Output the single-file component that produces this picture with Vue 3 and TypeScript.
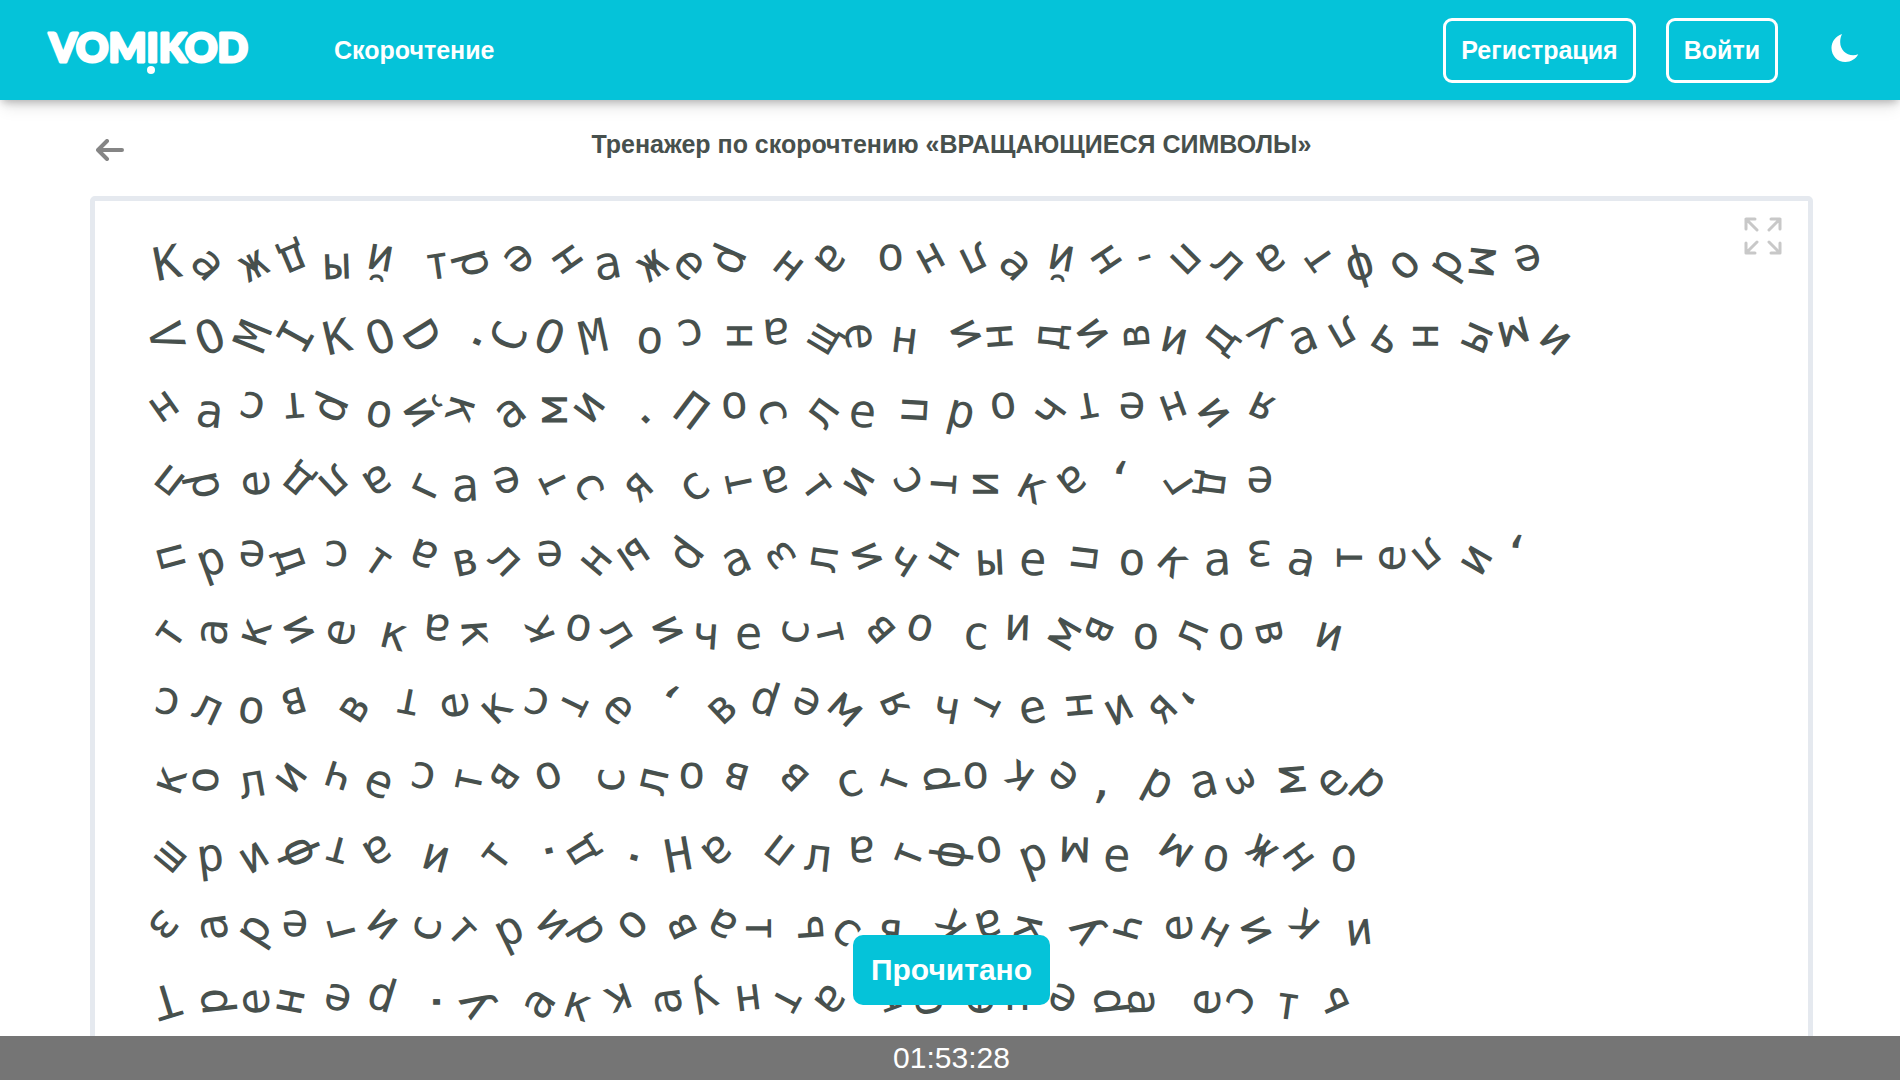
<script setup lang="ts">
import { ref } from 'vue'

interface Word {
  text: string
  angles: number[]
}

const word = (text: string, ...angles: number[]): Word => ({ text, angles })

// Each line is a list of words; every character carries its own rotation in degrees.
const lines = ref<Word[][]>([
  [
    word('Каждый', -11, 47, -28, 157, -2, 190),
    word('тренажер', -8, 75, 140, 235, -10, -35, 45, 114),
    word('на', 38, 130),
    word('онлайн-платформе', 178, 152, 154, 45, 190, 236, 164, 135, 43, 145, 235, -17, -45, -58, 96, 165),
  ],
  [
    word('VOMIKOD.COM', 76, -22, -68, -61, -13, -20, 58, -65, -68, 22, -12),
    word('оснащен', 3, 166, 270, 175, -59, 85, 7),
    word('индивидуальными', 243, 86, -85, 233, 266, 12, -53, 218, -22, 150, 33, 90, -66, 165, 40),
  ],
  [
    word('настройками.', 145, 6, 194, 175, 114, 10, 57, 107, -38, -90, 126, -46),
    word('После', 37, 175, 72, -54, 5),
    word('прочтения', 93, 14, 172, -54, 170, 182, 160, 51, 205),
  ],
  [
    word('предлагается', 218, 78, -95, 219, 137, 148, -65, -3, 165, 244, 60, -42),
    word('статистика,', -38, 258, 165, 53, 120, -125, 94, 90, 27, 143, 188),
    word('где', 236, 97, 182),
  ],
  [
    word('представлены', 255, -20, 183, 70, 180, 34, 200, -12, 45, 180, -50, 146),
    word('различные', 127, -25, -125, -82, 246, 32, 120, -3, 3),
    word('показатели,', 97, 0, 42, -3, 178, 12, 270, -88, 140, -60, 185),
  ],
  [
    word('такие', -55, -86, -72, 243, -78),
    word('как', 14, 185, 86),
    word('количество', -110, 190, 58, 244, 4, 0, -84, 77, 229, 195),
    word('символов', 2, 182, -60, 113, 0, -68, -5, 77),
    word('и', 14),
  ],
  [
    word('слов', 192, 25, 8, 163),
    word('в', -58),
    word('тексте,', 191, -98, -43, 196, 116, 42, 208),
    word('время', -43, 198, 205, 42, -113),
    word('чтения,', 10, 117, -12, 265, -28, -45, 115),
  ],
  [
    word('количество', -71, 90, -10, 126, 198, 22, 190, -78, 123, 160),
    word('слов', -88, -77, 180, 196),
    word('в', 224),
    word('строке,', -20, -70, -97, 178, 214, 220, 5),
    word('размер', 28, -14, 62, -95, -42, 42),
  ],
  [
    word('шрифта', -50, -7, -32, 247, 195, 150),
    word('и', 15),
    word('т.д.', -53, -103, 238, -75),
    word('На', -10, 140),
    word('платформе', 218, 6, 178, -69, -82, 170, -20, 182, 3),
    word('можно', 214, 10, 218, 54, 3),
  ],
  [
    word('зарегистрироваться', 132, -98, -57, 182, -105, 218, -77, 46, -26, 222, 58, 135, -116, 208, 90, -94, 40, 5),
    word('как', 235, 165, 103),
    word('Ученик', 235, 106, -93, 28, 63, 225),
    word('и', -6),
  ],
  [
    word('Тренер.', 163, -96, -95, 101, 195, 197, -90),
    word('У', 238),
    word('аккаунта', -57, 18, 160, -97, 150, 173, 118, 128),
    word('тренера', 160, 80, -90, 180, 205, -96, 88),
    word('есть', -88, 125, 8, -114),
  ],
])

const elapsed = ref('01:53:28')
</script>

<template>
  <header class="topbar">
    <a class="logo" href="#" aria-label="VOMIKOD">
      <svg width="220" height="60" viewBox="0 0 220 60">
        <text x="9" y="42">VOMIKOD</text>
        <circle cx="111" cy="50" r="4" />
      </svg>
    </a>
    <nav class="menu">
      <a href="#">Скорочтение</a>
    </nav>
    <div class="account">
      <a class="outlined" href="#">Регистрация</a>
      <a class="outlined" href="#">Войти</a>
    </div>
    <button class="theme" type="button" aria-label="Тёмная тема">
      <svg width="28" height="28" viewBox="0 0 28 28">
        <path d="M11 0C4.600 2.300 0.500 7.600 0.500 14C0.500 21.800 6.500 28 14.300 28C20 28 24.800 25 27.200 20.300C25.500 21 23.900 21.300 22.200 21.300C14.900 21.300 9.200 15.600 9.200 8.300C9.200 5.200 9.700 2.600 11 0Z" />
      </svg>
    </button>
  </header>

  <main class="stage">
    <div class="heading">
      <a class="back" href="#" aria-label="Назад">
        <svg width="28" height="22" viewBox="0 0 28 22">
          <path d="M2 11H26M11 2L2 11L11 20" />
        </svg>
      </a>
      <h1>Тренажер по скорочтению «ВРАЩАЮЩИЕСЯ СИМВОЛЫ»</h1>
    </div>

    <section class="board">
      <button class="expand" type="button" aria-label="Во весь экран">
        <svg width="38" height="38" viewBox="0 0 38 38">
          <path d="M2 12V2H11M2 2L13 13M27 2H36V12M36 2L25 13M2 26V36H11M2 36L13 25M27 36H36V26M36 36L25 25" />
        </svg>
      </button>
      <p v-for="(line, l) in lines" :key="l" class="line">
        <span v-for="(item, w) in line" :key="w" class="word">
          <span
            v-for="(char, c) in item.text"
            :key="c"
            class="char"
            :style="{ transform: `rotate(${item.angles[c]}deg)` }"
          >{{ char }}</span>
        </span>
      </p>
    </section>
  </main>

  <div class="dock">
    <button class="done" type="button">Прочитано</button>
    <div class="timer">{{ elapsed }}</div>
  </div>
</template>

<style>
body {
  margin: 0;
  background: #fff;
  color: #47504d;
  font-family: 'Liberation Sans', Arial, sans-serif;
}
</style>

<style scoped>
.topbar {
  position: relative;
  display: flex;
  align-items: center;
  height: 100px;
  padding: 0 40px;
  box-sizing: border-box;
  background: #05c3d9;
  box-shadow: 0 10px 15px -3px rgba(0, 0, 0, 0.1), 0 4px 8px -2px rgba(0, 0, 0, 0.25);
}

.topbar a {
  color: #fff;
  font-size: 25px;
  font-weight: 700;
  text-decoration: none;
}

.logo svg {
  display: block;
  fill: #fff;
}

.logo text {
  font: 900 40px Lato, sans-serif;
  stroke: #fff;
  stroke-width: 3px;
  stroke-linejoin: round;
}

.menu {
  flex: 1;
  margin-left: 74px;
}

.account {
  display: flex;
  gap: 30px;
}

.outlined {
  padding: 0 15px;
  border: 3px solid #fff;
  border-radius: 9px;
  line-height: 59px;
}

.theme,
.expand {
  padding: 0;
  border: 0;
  background: none;
}

.theme {
  margin: 0 1px 4px 53px;
}

.theme svg {
  display: block;
  fill: #fff;
}

.stage {
  padding: 0 87px 0 90px;
}

.heading {
  position: relative;
  padding: 30px 0 38px;
}

.heading h1 {
  margin: 0;
  font-size: 25px;
  line-height: 28px;
  text-align: center;
}

.back {
  position: absolute;
  top: 39px;
  left: 6px;
}

.back svg {
  display: block;
  fill: none;
  stroke: #858585;
  stroke-width: 4px;
  stroke-linecap: round;
  stroke-linejoin: round;
}

.board {
  position: relative;
  padding: 25px 58px 30px;
  border: 5px solid #e5e9ef;
  border-radius: 5px;
}

.expand {
  position: absolute;
  top: 16px;
  right: 26px;
}

.expand svg {
  display: block;
  fill: none;
  stroke: #c8c8c8;
  stroke-width: 3px;
  stroke-linecap: round;
  stroke-linejoin: round;
}

.line {
  display: flex;
  gap: 29px;
  margin: 0;
  font-family: 'DejaVu Sans Mono', monospace;
  font-size: 46px;
  line-height: 74px;
}

.word {
  display: flex;
  gap: 15px;
}

.char {
  width: 0.6em;
  height: 74px;
  transform-origin: 50% 36px;
}

.dock {
  position: fixed;
  right: 0;
  bottom: 0;
  left: 0;
  display: flex;
  flex-direction: column;
  align-items: center;
}

.done {
  height: 70px;
  margin: 0 0 31px 3px;
  padding: 0 18px;
  border: 0;
  border-radius: 10px;
  background: #05c3d9;
  color: #fff;
  font: 700 30px 'Liberation Sans', Arial, sans-serif;
}

.timer {
  width: 100%;
  padding-left: 3px;
  box-sizing: border-box;
  background: #757575;
  color: #fff;
  font-size: 30px;
  line-height: 44px;
  text-align: center;
}
</style>
